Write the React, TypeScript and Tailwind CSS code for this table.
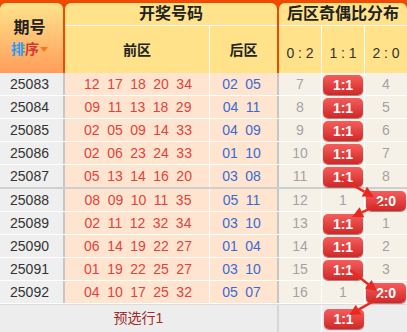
import React from "react";

type Row = { id: string; front: string[]; back: string[]; dist: (number | "B")[] };

const ROWS: Row[] = [
  { id: "25083", front: ["12", "17", "18", "20", "34"], back: ["02", "05"], dist: [7, "B", 4] },
  { id: "25084", front: ["09", "11", "13", "18", "29"], back: ["04", "11"], dist: [8, "B", 5] },
  { id: "25085", front: ["02", "05", "09", "14", "33"], back: ["04", "09"], dist: [9, "B", 6] },
  { id: "25086", front: ["02", "06", "23", "24", "33"], back: ["01", "10"], dist: [10, "B", 7] },
  { id: "25087", front: ["05", "13", "14", "16", "20"], back: ["03", "08"], dist: [11, "B", 8] },
  { id: "25088", front: ["08", "09", "10", "11", "35"], back: ["05", "11"], dist: [12, 1, "B"] },
  { id: "25089", front: ["02", "11", "12", "32", "34"], back: ["03", "10"], dist: [13, "B", 1] },
  { id: "25090", front: ["06", "14", "19", "22", "27"], back: ["01", "04"], dist: [14, "B", 2] },
  { id: "25091", front: ["01", "19", "22", "25", "27"], back: ["03", "10"], dist: [15, "B", 3] },
  { id: "25092", front: ["04", "10", "17", "25", "32"], back: ["05", "07"], dist: [16, 1, "B"] },
];

const LABELS = ["0:2", "1:1", "2:0"];

// trend arrows between badges, in page pixels
const ARROWS = [
  [340, 178, 374, 197],
  [384, 202, 352, 217],
  [350, 270, 377, 291],
  [381, 297, 349, 315],
];

function Badge({ label }: { label: string }) {
  return (
    <div className="mt-[2px] flex h-[20px] w-[40px] items-center justify-center rounded-[5px] bg-linear-to-b from-[#f55c5c] to-[#d02626] text-[14px] font-bold leading-none text-white shadow-[0_1px_1px_rgba(110,0,0,0.55)]">
      {label}
    </div>
  );
}

function Arrow({ x1, y1, x2, y2 }: { x1: number; y1: number; x2: number; y2: number }) {
  const len = Math.hypot(x2 - x1, y2 - y1);
  const ux = (x2 - x1) / len;
  const uy = (y2 - y1) / len;
  const bx = x2 - ux * 11;
  const by = y2 - uy * 11;
  const hw = 5.5;
  return (
    <g fill="#e8291f" stroke="#e8291f">
      <line x1={x1} y1={y1} x2={bx} y2={by} strokeWidth={2.4} />
      <polygon
        stroke="none"
        points={`${x2},${y2} ${bx - uy * hw},${by + ux * hw} ${bx + uy * hw},${by - ux * hw}`}
      />
    </g>
  );
}

function DistCell({ v, col }: { v: number | "B"; col: number }) {
  return (
    <div
      className={
        col === 2
          ? "flex flex-1 justify-center"
          : "flex w-[43px] justify-center border-r border-white"
      }
    >
      {v === "B" ? (
        <Badge label={LABELS[col]} />
      ) : (
        <span className="self-center text-[14px] text-[#a3a3a3]">{v}</span>
      )}
    </div>
  );
}

export default function App() {
  return (
    <div className="relative h-[332px] w-[407px] overflow-hidden bg-[#ececec] font-['Liberation_Sans','Noto_Sans_CJK_SC',sans-serif] text-[14px]">
      {/* Header */}
      <div className="flex h-[73px] bg-[#f04a00] pt-[3px] text-[#222]">
        <div className="flex w-[63px] flex-col items-center justify-center rounded-t-[6px] bg-linear-to-b from-[#ffe38c] to-[#ff9d5a] pr-[4px]">
          <span className="text-[16px] font-bold leading-[20px]">期号</span>
          <span className="mt-[2px] flex items-center text-[14px] font-bold leading-[18px]">
            <span className="text-[#2d9cf0]">排</span>
            <span className="text-[#d53a35]">序</span>
            <svg width="8" height="5" viewBox="0 0 8 5" className="ml-[1px]">
              <polygon points="0,0 8,0 4,5" fill="#ff7417" />
            </svg>
          </span>
        </div>
        <div className="ml-[2px] flex w-[212px] flex-col rounded-t-[6px] bg-[#ffe28a]">
          <div className="flex h-[23px] items-center justify-center border-b border-white text-[16px] font-bold">
            开奖号码
          </div>
          <div className="flex flex-1 font-bold">
            <div className="flex w-[145px] items-center justify-center border-r border-white pt-[2px]">前区</div>
            <div className="flex flex-1 items-center justify-center pt-[2px]">后区</div>
          </div>
        </div>
        <div className="ml-[2px] flex flex-1 flex-col rounded-t-[6px] bg-[#ffe28a]">
          <div className="flex h-[23px] items-center justify-center border-b border-white text-[16px] font-bold">
            后区奇偶比分布
          </div>
          <div className="flex flex-1 whitespace-pre text-[#333]">
            <div className="flex w-[43px] items-center justify-center border-r border-white pt-[8px]">0 : 2</div>
            <div className="flex w-[43px] items-center justify-center border-r border-white pt-[8px]">1 : 1</div>
            <div className="flex flex-1 items-center justify-center pt-[8px]">2 : 0</div>
          </div>
        </div>
      </div>

      {/* Rows */}
      {ROWS.map((r, i) => (
        <div
          key={r.id}
          className={
            i === 4
              ? "flex h-[24px] border-b-2 border-[#cfcfcf]"
              : "flex h-[23px] border-b border-white"
          }
        >
          <div className="flex w-[65px] items-center justify-center border-r-2 border-[#c6c6c6] bg-[#efefef] pr-[4px] text-[#333]">
            {r.id}
          </div>
          <div className="flex w-[145px] items-center justify-center gap-[7.5px] border-r border-white bg-[#ffe5cf] pl-[2px] text-[#e5403c]">
            {r.front.map((n, k) => (
              <span key={k}>{n}</span>
            ))}
          </div>
          <div className="flex w-[69px] items-center justify-center gap-[7.5px] border-r-2 border-[#c6c6c6] bg-[#ffe5cf] pr-[4px] text-[#3a6ad6]">
            {r.back.map((n, k) => (
              <span key={k}>{n}</span>
            ))}
          </div>
          <div className="flex flex-1 bg-[#f6f1e6]">
            {r.dist.map((v, k) => (
              <DistCell key={k} v={v} col={k} />
            ))}
          </div>
        </div>
      ))}

      {/* Footer */}
      <div className="flex h-[28px] border-t border-[#dcdcdc] bg-[#ededed]">
        <div className="flex w-[277px] items-center justify-center text-[#a32a2a]">预选行1</div>
        <div className="flex flex-1 border-l-2 border-[#d6d6d6]">
          <div className="w-[43px] border-r border-white" />
          <div className="flex w-[43px] justify-center pt-[2px]">
            <Badge label="1:1" />
          </div>
          <div className="flex-1" />
        </div>
      </div>

      <svg className="pointer-events-none absolute inset-0" width="407" height="332">
        {ARROWS.map(([x1, y1, x2, y2], i) => (
          <Arrow key={i} x1={x1} y1={y1} x2={x2} y2={y2} />
        ))}
      </svg>
    </div>
  );
}
